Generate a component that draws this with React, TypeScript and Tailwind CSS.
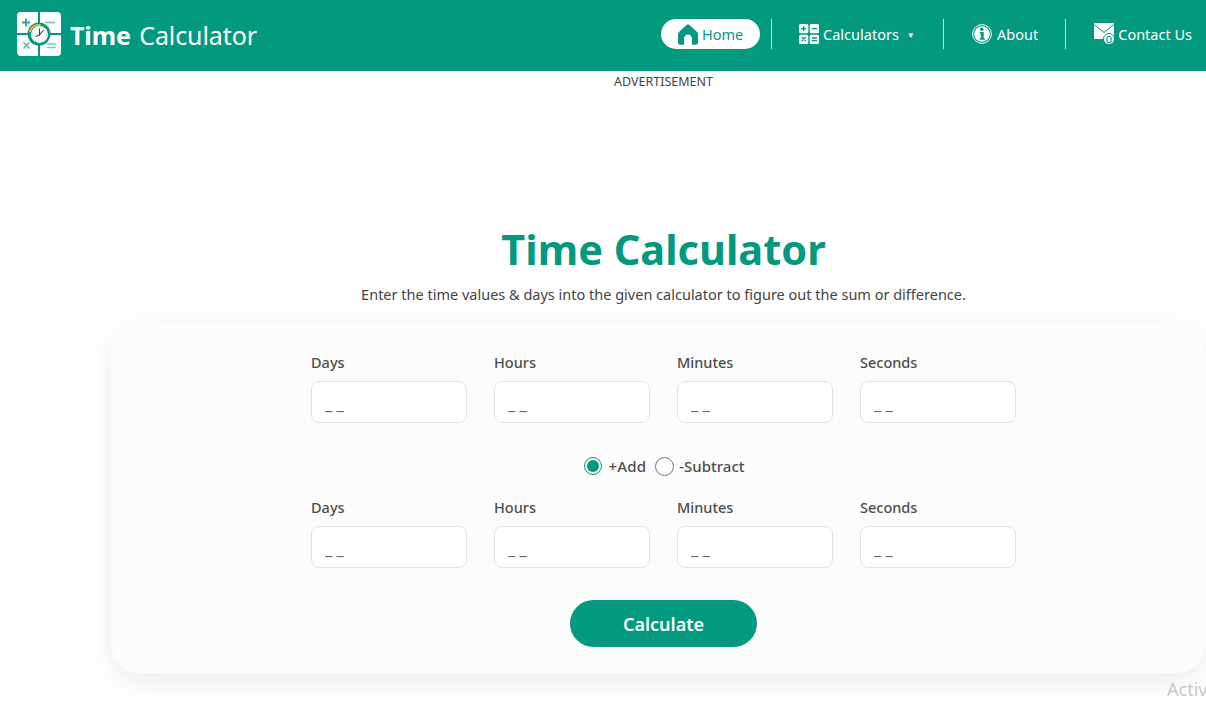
const green = "#03997e";

function Logo() {
  return (
    <svg width="44" height="44" viewBox="0 0 44 44" className="shrink-0">
      <rect x="0" y="0" width="44" height="44" rx="4" fill="#fff" />
      <path d="M22 0v44M0 22h44" stroke="#03997e" strokeWidth="2" />
      <path d="M5 10.500h8M9 6.500v8" stroke="#2fa68b" strokeWidth="1.800" fill="none" />
      <path d="M28 10.500h10" stroke="#7cc9b7" strokeWidth="1.800" fill="none" />
      <path d="M6.500 30.500l6 6M12.500 30.500l-6 6" stroke="#5cb8a3" strokeWidth="1.600" />
      <path d="M30 32h9M30 35.500h9" stroke="#7cc9b7" strokeWidth="1.600" />
      <circle cx="22" cy="22" r="11.500" fill="#03997e" />
      <circle cx="22.500" cy="22.500" r="8.500" fill="#fff" />
      <circle cx="22.500" cy="22.500" r="7.300" fill="none" stroke="#9aa8b5" strokeWidth="0.800" strokeDasharray="0.800 2.200" />
      <path d="M12.500 20a10 10 0 0 1 11-7" stroke="#edb253" strokeWidth="2" fill="none" />
      <path d="M22.500 16.500v6.500l-4 1.500M22.500 23l4-5" stroke="#26456b" strokeWidth="1.100" fill="none" />
    </svg>
  );
}

function HomeIcon() {
  return (
    <svg width="20" height="21" viewBox="0 0 20 21" className="shrink-0">
      <path d="M10 0.500C11 0.500 11.800 1.200 12.500 1.900L18.800 7.800C19.500 8.500 20 9.300 20 10.300V18.500C20 19.800 19 20.800 17.700 20.800H14V14.500C14 12.300 12.200 10.500 10 10.500C7.800 10.500 6 12.300 6 14.500V20.800H2.300C1 20.800 0 19.800 0 18.500V10.300C0 9.300 0.500 8.500 1.200 7.800L7.500 1.900C8.200 1.200 9 0.500 10 0.500Z" fill={green} />
    </svg>
  );
}

function CalcIcon() {
  return (
    <svg width="20" height="20" viewBox="0 0 20 20" className="shrink-0">
      <rect x="0" y="0" width="9.300" height="9.300" rx="1.500" fill="#fff" />
      <rect x="10.700" y="0" width="9.300" height="9.300" rx="1.500" fill="#fff" />
      <rect x="0" y="10.700" width="9.300" height="9.300" rx="1.500" fill="#fff" />
      <rect x="10.700" y="10.700" width="9.300" height="9.300" rx="1.500" fill="#fff" />
      <path d="M2 4.700h5.300M4.650 2v5.300M12.700 4.700h5.300M2.700 13l4 4M6.700 13l-4 4M12.700 14h5.300M12.700 16.700h5.300" stroke="#03997e" strokeWidth="1.300" />
    </svg>
  );
}

function InfoIcon() {
  return (
    <svg width="20" height="20" viewBox="0 0 20 20" className="shrink-0">
      <circle cx="10" cy="10" r="9.400" fill="none" stroke="#fff" strokeWidth="1" />
      <circle cx="10" cy="10" r="7.800" fill="#fff" />
      <circle cx="9.800" cy="5.300" r="1.800" fill="#03997e" />
      <path d="M7.800 8h3.900v6.300h1.200v1.400H7.500v-1.400h1.300V9.400h-1Z" fill="#03997e" />
    </svg>
  );
}

function MailIcon() {
  return (
    <svg width="21" height="22" viewBox="0 0 21 22" className="shrink-0">
      <path d="M0 0h20v16H0Z" fill="#fff" />
      <path d="M0 1.500l10 8l10-8" stroke="#03997e" strokeWidth="1" fill="none" />
      <circle cx="15" cy="16" r="5.500" fill="#fff" stroke="#03997e" strokeWidth="1" />
      <rect x="13" y="13.500" width="4" height="6" rx="1.500" fill="none" stroke="#03997e" strokeWidth="1.200" />
    </svg>
  );
}

function TimeInputs() {
  const labels = ["Days", "Hours", "Minutes", "Seconds"];
  return (
    <div className="flex gap-[27px]">
      {labels.map((label) => (
        <label key={label} className="flex w-[156px] flex-col">
          <span className="h-[18px] text-[14.500px] leading-[16px] font-medium text-[#4d4d4d]">{label}</span>
          <input
            placeholder="_ _"
            className="mt-[9px] h-[42px] w-[156px] rounded-[8px] border border-[#dfe3e8] bg-white px-[13px] pt-[3px] text-[16.500px] outline-none placeholder:text-[#666666]"
          />
        </label>
      ))}
    </div>
  );
}

export default function App() {
  return (
    <div className="relative h-[701px] w-[1206px] overflow-hidden bg-white font-['Noto_Sans',sans-serif]">
      <header className="flex h-[71px] items-center justify-between bg-[#03997e] pr-[14px] pl-[17px]">
        <div className="flex items-center gap-[9px]">
          <div className="-mt-[3px]">
            <Logo />
          </div>
          <div className="text-[25px] leading-none tracking-[-0.1px] text-white">
            <span className="font-bold">Time</span> <span className="ml-[2px]">Calculator</span>
          </div>
        </div>
        <nav className="-mt-[3px] flex items-center text-[14.500px] text-white">
          <a className="flex h-[30px] w-[99px] items-center justify-center gap-[4px] rounded-full bg-white text-[#03997e]">
            <HomeIcon />
            <span className="pt-[2px]">Home</span>
          </a>
          <span className="ml-[11px] h-[30px] w-px bg-[#cfeae4]" />
          <a className="ml-[27px] flex w-[116px] items-center gap-[4px]">
            <CalcIcon />
            <span className="pt-[2px]">Calculators</span>
            <span className="ml-[4px] pt-[2px] text-[8px]">▼</span>
          </a>
          <span className="ml-[28px] h-[30px] w-px bg-[#cfeae4]" />
          <a className="ml-[28px] flex items-center gap-[5px]">
            <InfoIcon />
            <span className="pt-[2px]">About</span>
          </a>
          <span className="ml-[27px] h-[30px] w-px bg-[#cfeae4]" />
          <a className="ml-[28px] flex items-center gap-[3px]">
            <MailIcon />
            <span className="pt-[2px]">Contact Us</span>
          </a>
        </nav>
      </header>

      <main className="flex flex-col">
        <div className="mt-[3px] pl-[121px] text-center text-[12.500px] leading-[16px] text-[#444444]">ADVERTISEMENT</div>
        <h1 className="mt-[131px] pl-[121px] text-center text-[41.500px] leading-[56px] font-bold text-[#03997e]">Time Calculator</h1>
        <p className="mt-[7px] pl-[121px] text-center text-[14.500px] leading-[20px] text-[#444444]">
          Enter the time values &amp; days into the given calculator to figure out the sum or difference.
        </p>
        <section className="mt-[19px] ml-[111px] flex h-[351px] w-[1095px] flex-col rounded-[32px] bg-[#fcfcfc] pt-[31px] pl-[200px] shadow-[0_8px_32px_rgba(0,0,0,0.08)]">
          <TimeInputs />
          <div className="mt-[33px] flex h-[20px] w-[705px] items-center justify-center pl-[2px] text-[15px] font-medium text-[#4d4d4d]">
            <span className="flex h-[18px] w-[18px] items-center justify-center rounded-full border-[1.500px] border-[#03997e]">
              <span className="h-[12px] w-[12px] rounded-full bg-[#03997e]" />
            </span>
            <span className="ml-[6px] tracking-[0.2px]">+Add</span>
            <span className="ml-[9px] h-[19px] w-[19px] rounded-full border border-[#777777] bg-white" />
            <span className="ml-[5px]">-Subtract</span>
          </div>
          <div className="mt-[23px]">
            <TimeInputs />
          </div>
          <div className="mt-[32px] flex w-[705px] justify-center">
            <button className="h-[47px] w-[187px] rounded-full bg-[#03997e] pt-[1px] text-[18px] font-semibold text-white">Calculate</button>
          </div>
        </section>
      </main>

      <div className="absolute top-[677px] left-[1167px] text-[18px] leading-[24px] text-[#c8c8c8]">Activ</div>
    </div>
  );
}
